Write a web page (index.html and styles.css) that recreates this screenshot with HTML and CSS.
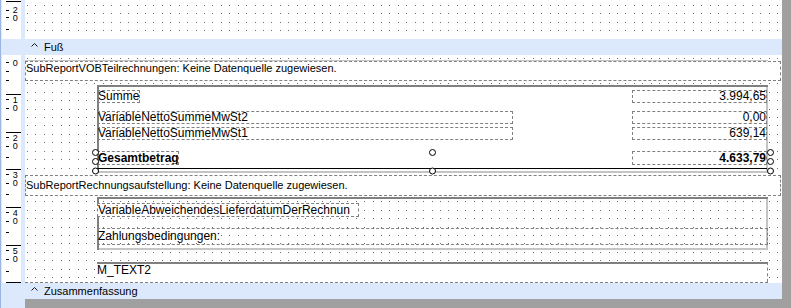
FILE: index.html
```html
<!DOCTYPE html>
<html lang="de">
<head>
    <meta charset="UTF-8">
    <title>Berichtsdesigner</title>
    <link rel="stylesheet" href="styles.css">
</head>
<body>
    <div class="designer">
        <div class="band band-top">
            <div class="gutter">
                <svg class="ruler" width="19" height="39" viewBox="0 0 19 39">
                    <rect x="4" y="1" width="15" height="1"/>
                    <rect x="4" y="10" width="3" height="1"/>
                    <rect x="4" y="17" width="3" height="1"/>
                    <rect x="4" y="29" width="3" height="1"/>
                    <text class="mark" x="13.3" y="5">20</text>
                </svg>
            </div>
            <div class="canvas canvas-top"></div>
        </div>

        <div class="band-head">
            <svg class="caret" width="7" height="5" viewBox="0 0 7 5"><polyline points="0.5,4.5 3.5,1.5 6.5,4.5"/></svg>
            Fuß
        </div>

        <div class="band band-footer">
            <div class="gutter">
                <svg class="ruler" width="19" height="228" viewBox="0 0 19 228">
                    <rect x="4" y="7" width="3" height="1"/>
                    <rect x="4" y="16" width="3" height="1"/>
                    <rect x="4" y="25" width="3" height="1"/>
                    <text class="mark" x="13.3" y="3">0</text>

                    <rect x="4" y="39" width="15" height="1"/>
                    <rect x="4" y="44" width="3" height="1"/>
                    <rect x="4" y="53" width="3" height="1"/>
                    <rect x="4" y="64" width="3" height="1"/>
                    <text class="mark" x="13.3" y="40">10</text>

                    <rect x="4" y="77" width="15" height="1"/>
                    <rect x="4" y="82" width="3" height="1"/>
                    <rect x="4" y="91" width="3" height="1"/>
                    <rect x="4" y="102" width="3" height="1"/>
                    <text class="mark" x="13.3" y="78">20</text>

                    <rect x="4" y="114" width="15" height="1"/>
                    <rect x="4" y="119" width="3" height="1"/>
                    <rect x="4" y="128" width="3" height="1"/>
                    <rect x="4" y="139" width="3" height="1"/>
                    <text class="mark" x="13.3" y="115">30</text>

                    <rect x="4" y="152" width="15" height="1"/>
                    <rect x="4" y="157" width="3" height="1"/>
                    <rect x="4" y="166" width="3" height="1"/>
                    <rect x="4" y="177" width="3" height="1"/>
                    <text class="mark" x="13.3" y="153">40</text>

                    <rect x="4" y="190" width="15" height="1"/>
                    <rect x="4" y="195" width="3" height="1"/>
                    <rect x="4" y="204" width="3" height="1"/>
                    <rect x="4" y="216" width="3" height="1"/>
                    <text class="mark" x="13.3" y="191">50</text>

                    <rect x="4" y="227" width="15" height="1"/>
                </svg>
            </div>
            <div class="canvas canvas-footer">
                <div class="subreport subreport-first">SubReportVOBTeilrechnungen: Keine Datenquelle zugewiesen.</div>

                <div class="frame frame-totals">
                    <div class="row row-first">
                        <div class="field label-sum">Summe</div>
                        <div class="field value">3.994,65</div>
                    </div>
                    <div class="row row-second">
                        <div class="field label-wide">VariableNettoSummeMwSt2</div>
                        <div class="field value">0,00</div>
                    </div>
                    <div class="row row-third">
                        <div class="field label-wide">VariableNettoSummeMwSt1</div>
                        <div class="field value">639,14</div>
                    </div>
                    <div class="row row-total">
                        <div class="field label-total">Gesamtbetrag</div>
                        <div class="field value">4.633,79</div>
                    </div>
                    <div class="rule"></div>
                </div>

                <div class="subreport subreport-second">SubReportRechnungsaufstellung: Keine Datenquelle zugewiesen.</div>

                <div class="frame frame-info">
                    <div class="field field-delivery">VariableAbweichendesLieferdatumDerRechnun</div>
                    <div class="field field-terms">Zahlungsbedingungen:</div>
                </div>

                <div class="memo-row">
                    <div class="memo">M_TEXT2</div>
                </div>

                <svg class="handles" width="757" height="228" viewBox="0 0 757 228">
                    <circle cx="70.5" cy="97.5" r="3"/>
                    <circle cx="70.5" cy="106.5" r="3"/>
                    <circle cx="70.5" cy="116" r="3"/>
                    <circle cx="407.5" cy="97.5" r="3"/>
                    <circle cx="407.5" cy="116" r="3"/>
                    <circle cx="745.5" cy="97.5" r="3"/>
                    <circle cx="745.5" cy="106.5" r="3"/>
                    <circle cx="745.5" cy="116" r="3"/>
                </svg>
            </div>
        </div>

        <div class="band-head band-head-last">
            <svg class="caret" width="7" height="5" viewBox="0 0 7 5"><polyline points="0.5,4.5 3.5,1.5 6.5,4.5"/></svg>
            Zusammenfassung
        </div>

        <div class="bottom-row">
            <div class="bottom-gutter"></div>
            <div class="bottom-fill"></div>
        </div>
    </div>
</body>
</html>
```

FILE: styles.css
```css
* {
    margin: 0;
    padding: 0;
    box-sizing: border-box;
}

body {
    width: 791px;
    height: 308px;
    overflow: hidden;
    background: #a0a0a0;
    font-family: "Liberation Sans", Arial, sans-serif;
    color: #000;
}

.designer {
    width: 782px;
    height: 308px;
    display: flex;
    flex-direction: column;
    border-left: 1px solid #9cb6e3;
}

.band {
    display: flex;
}

.band-top {
    height: 39px;
}

.band-footer {
    height: 228px;
}

.gutter {
    width: 24px;
    padding-left: 1px;
    background: #dce9fc;
}

.ruler {
    display: block;
    background: #fff;
}

.ruler rect {
    fill: #000;
}

/* ruler numbers are written top to bottom, one digit under the other */
.ruler .mark {
    font-family: "Liberation Sans", Arial, sans-serif;
    font-size: 9px;
    writing-mode: vertical-rl;
    text-orientation: upright;
    letter-spacing: -2.5px;
    fill: #000;
}

.canvas {
    width: 757px;
    position: relative;
    isolation: isolate;
    background: #fff;
    display: flex;
    flex-direction: column;
    align-items: flex-start;
}

/* grid dots of the design surface */
.canvas::before {
    content: "";
    position: absolute;
    top: 0;
    left: 0;
    right: 0;
    bottom: 0;
    z-index: -1;
    background-image: linear-gradient(to right,
        #6e6e6e 0 1px, transparent 1px 8px,
        #6e6e6e 8px 9px, transparent 9px 17px,
        #6e6e6e 17px 18px, transparent 18px 25px,
        #6e6e6e 25px 26px, transparent 26px 34px,
        #6e6e6e 34px 35px, transparent 35px 42px,
        #6e6e6e 42px 43px, transparent 43px 51px,
        #6e6e6e 51px 52px, transparent 52px 59px);
    background-size: 59px 100%;
    background-position: 2px 0;
    -webkit-mask-image: linear-gradient(to bottom,
        #000 0 1px, transparent 1px 8px,
        #000 8px 9px, transparent 9px 17px,
        #000 17px 18px, transparent 18px 25px,
        #000 25px 26px, transparent 26px 34px,
        #000 34px 35px, transparent 35px 42px,
        #000 42px 43px, transparent 43px 51px,
        #000 51px 52px, transparent 52px 59px);
    mask-image: linear-gradient(to bottom,
        #000 0 1px, transparent 1px 8px,
        #000 8px 9px, transparent 9px 17px,
        #000 17px 18px, transparent 18px 25px,
        #000 25px 26px, transparent 26px 34px,
        #000 34px 35px, transparent 35px 42px,
        #000 42px 43px, transparent 43px 51px,
        #000 51px 52px, transparent 52px 59px);
    -webkit-mask-size: 100% 59px;
    mask-size: 100% 59px;
}

.canvas-top::before {
    -webkit-mask-position: 0 5px;
    mask-position: 0 5px;
}

.canvas-footer::before {
    -webkit-mask-position: 0 3px;
    mask-position: 0 3px;
}

.band-head {
    height: 16px;
    display: flex;
    align-items: flex-start;
    padding-left: 30px;
    background: #dce9fc;
    font-size: 11px;
    line-height: 16px;
}

.caret {
    margin-top: 3px;
    margin-right: 6px;
}

.caret polyline {
    fill: none;
    stroke: #1a1a1a;
    stroke-width: 1;
}

.subreport {
    width: 756px;
    border: 1px dashed #808080;
    background: #fff;
    font-size: 11px;
    line-height: 13px;
    white-space: nowrap;
}

.subreport-first {
    position: relative;
    margin-top: 6px;
    height: 20px;
}

.subreport-first::before {
    content: "";
    position: absolute;
    top: -2px;
    left: -1px;
    width: 743px;
    height: 1px;
    background: #c4c4c4;
}

.subreport-second {
    margin-top: 2px;
    height: 21px;
    padding-top: 3px;
}

.frame {
    margin-left: 72px;
    width: 671px;
    display: flex;
    flex-direction: column;
    align-items: flex-start;
    box-shadow: inset 2px 2px 0 #808080, inset -2px -2px 0 #c4c4c4;
}

.frame-totals {
    margin-top: 4px;
    height: 88px;
    background: #fff;
}

.frame-info {
    margin-top: 1px;
    height: 53px;
}

.row {
    width: 100%;
    display: flex;
}

.row-first {
    margin-top: 5px;
}

.row-second {
    margin-top: 8px;
}

.row-third {
    margin-top: 3px;
}

.row-total {
    margin-top: 11px;
    font-weight: bold;
}

.field {
    height: 13px;
    border: 1px dashed #808080;
    font-size: 12px;
    line-height: 11px;
    white-space: nowrap;
    overflow: hidden;
}

.row-total .field {
    height: 14px;
    line-height: 12px;
}

.label-sum {
    width: 43px;
}

.label-wide {
    width: 416px;
}

.label-total {
    width: 82px;
}

.value {
    width: 135px;
    margin-left: auto;
    margin-right: 1px;
    text-align: right;
}

.rule {
    margin-top: 3px;
    width: 670px;
    height: 1px;
    background: #000;
}

.field-delivery {
    margin-top: 6px;
    width: 262px;
    height: 14px;
    line-height: 12px;
    background: #fff;
}

.field-terms {
    margin-top: 11px;
    width: 671px;
    height: 17px;
    line-height: 15px;
}

.memo-row {
    margin-top: 12px;
    width: 743px;
    height: 21px;
    display: flex;
    border-bottom: 1px dashed #808080;
}

.memo {
    flex: 1;
    margin-left: 72px;
    border-top: 2px solid #808080;
    border-right: 1px dashed #808080;
    background: #fff;
    font-size: 12px;
    line-height: 13px;
}

.handles {
    position: absolute;
    top: 0;
    left: 0;
    pointer-events: none;
}

.handles circle {
    fill: #fff;
    stroke: #000;
    stroke-width: 1;
}

.bottom-row {
    height: 9px;
    display: flex;
}

.bottom-gutter {
    width: 24px;
    background: #dce9fc;
}

.bottom-fill {
    flex: 1;
    background: #a0a0a0;
}
```
